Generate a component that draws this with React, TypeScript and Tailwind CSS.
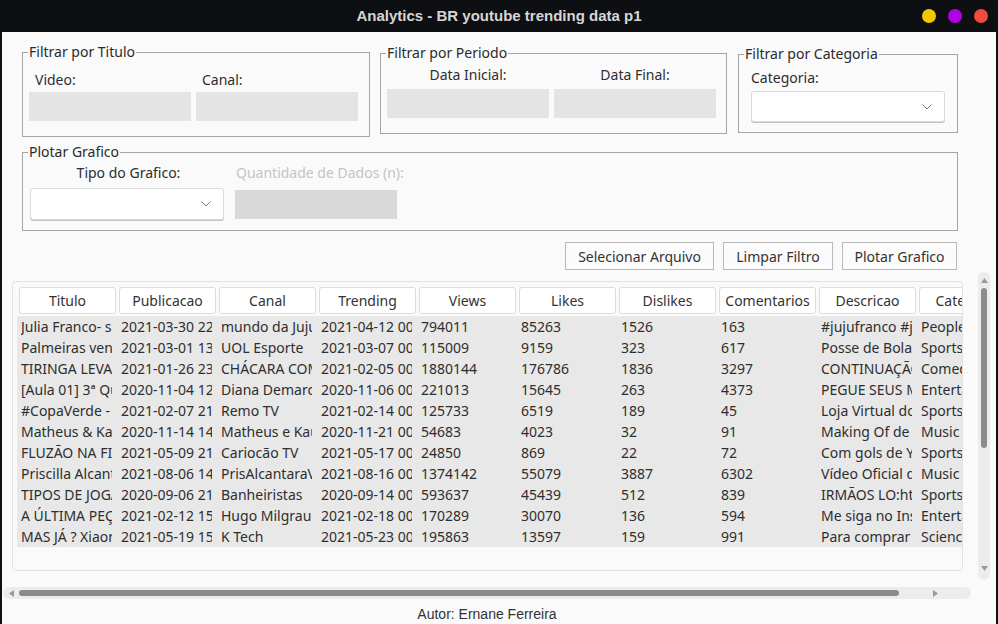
import React from "react";

const rows: string[][] = [
  ["Julia Franco- sabe aquela", "2021-03-30 22:00:05", "mundo da Juju", "2021-04-12 00:00:00", "794011", "85263", "1526", "163", "#jujufranco #julia", "People & Blogs"],
  ["Palmeiras vence o", "2021-03-01 13:45:10", "UOL Esporte", "2021-03-07 00:00:00", "115009", "9159", "323", "617", "Posse de Bola", "Sports"],
  ["TIRINGA LEVA OS", "2021-01-26 23:01:44", "CHÁCARA COMEDIA", "2021-02-05 00:00:00", "1880144", "176786", "1836", "3297", "CONTINUAÇÃO", "Comedy"],
  ["[Aula 01] 3ª Quinzena", "2020-11-04 12:30:00", "Diana Demarchi", "2020-11-06 00:00:00", "221013", "15645", "263", "4373", "PEGUE SEUS MATERIAIS", "Entertainment"],
  ["#CopaVerde - Remo", "2021-02-07 21:15:00", "Remo TV", "2021-02-14 00:00:00", "125733", "6519", "189", "45", "Loja Virtual do Remo", "Sports"],
  ["Matheus & Kauan", "2020-11-14 14:00:00", "Matheus e Kauan", "2020-11-21 00:00:00", "54683", "4023", "32", "91", "Making Of de", "Music"],
  ["FLUZÃO NA FINAL", "2021-05-09 21:40:00", "Cariocão TV", "2021-05-17 00:00:00", "24850", "869", "22", "72", "Com gols de Yago", "Sports"],
  ["Priscilla Alcantara", "2021-08-06 14:00:00", "PrisAlcantaraVEVO", "2021-08-16 00:00:00", "1374142", "55079", "3887", "6302", "Vídeo Oficial de", "Music"],
  ["TIPOS DE JOGADORES", "2020-09-06 21:00:00", "Banheiristas", "2020-09-14 00:00:00", "593637", "45439", "512", "839", "IRMÃOS LO:https", "Sports"],
  ["A ÚLTIMA PEÇA", "2021-02-12 15:00:00", "Hugo Milgrau", "2021-02-18 00:00:00", "170289", "30070", "136", "594", "Me siga no Instagram", "Entertainment"],
  ["MAS JÁ ? Xiaomi", "2021-05-19 15:00:00", "K Tech", "2021-05-23 00:00:00", "195863", "13597", "159", "991", "Para comprar", "Science & Technology"],
];

const headers = ["Titulo", "Publicacao", "Canal", "Trending", "Views", "Likes", "Dislikes", "Comentarios", "Descricao", "Categoria"];

const Group = ({
  title,
  className,
  children,
}: {
  title: string;
  className: string;
  children: React.ReactNode;
}) => (
  <fieldset className={`border border-[#a4a4a4] ${className}`}>
    <legend className="ml-[5px] px-[1px] text-[14px] leading-[18px] text-[#2b2b2b]">{title}</legend>
    {children}
  </fieldset>
);

// combo box with the small chevron on the right
const Combo = ({ h }: { h: string }) => (
  <div
    className={`${h} w-[194px] rounded-[3px] border border-[#dadada] bg-white shadow-[0_1px_0_#c4c4c4] flex items-center justify-end pr-[12px]`}
  >
    <svg width="10" height="6" viewBox="0 0 10 6">
      <polyline points="0.5,0.5 5,5 9.5,0.5" fill="none" stroke="#7c7c7c" strokeWidth="1" />
    </svg>
  </div>
);

export default function App() {
  return (
    <div className="w-[998px] h-[624px] overflow-hidden bg-[#0e0f13] font-['Noto_Sans',sans-serif] text-[#2e2e2e]">
      {/* title bar */}
      <div className="h-[32px] grid grid-cols-[1fr_auto_1fr] items-center">
        <div />
        <div className="font-['Liberation_Sans',sans-serif] font-bold text-[15px] text-[#d6d6d6]">
          Analytics - BR youtube trending data p1
        </div>
        <div className="flex justify-end gap-[12px] pr-[10px]">
          <span className="w-[14px] h-[14px] rounded-full bg-[#f3c600]" />
          <span className="w-[14px] h-[14px] rounded-full bg-[#b200e4]" />
          <span className="w-[14px] h-[14px] rounded-full bg-[#f04a3e]" />
        </div>
      </div>

      {/* window body */}
      <div className="mx-[2px] h-[592px] bg-[#fafafa] flex flex-col">
        {/* filters */}
        <div className="flex items-start pt-[11px] pl-[20px]">
          <Group title="Filtrar por Titulo" className="w-[348px]">
            <div className="pl-[6px] pb-[15px] grid grid-cols-[162px_162px] gap-x-[5px] text-[14px]">
              <div className="mt-[10px] leading-[18px] pl-[6px]">Video:</div>
              <div className="mt-[10px] leading-[18px] pl-[6px]">Canal:</div>
              <div className="mt-[3px] h-[29px] bg-[#e4e4e4]" />
              <div className="mt-[3px] h-[29px] bg-[#e4e4e4]" />
            </div>
          </Group>

          <Group title="Filtrar por Periodo" className="w-[347px] ml-[10px] mt-[1px]">
            <div className="pl-[6px] pb-[15px] grid grid-cols-[162px_162px] gap-x-[5px] text-[14px]">
              <div className="mt-[4px] leading-[18px] text-center">Data Inicial:</div>
              <div className="mt-[4px] leading-[18px] text-center">Data Final:</div>
              <div className="mt-[5px] h-[29px] bg-[#e4e4e4]" />
              <div className="mt-[5px] h-[29px] bg-[#e4e4e4]" />
            </div>
          </Group>

          <Group title="Filtrar por Categoria" className="w-[220px] ml-[11px] mt-[2px]">
            <div className="pl-[12px] pb-[10px] text-[14px]">
              <div className="mt-[6px] leading-[18px]">Categoria:</div>
              <div className="mt-[4px]">
                <Combo h="h-[31px]" />
              </div>
            </div>
          </Group>
        </div>

        {/* plot group */}
        <Group title="Plotar Grafico" className="ml-[20px] mt-[6px] w-[936px]">
          <div className="pl-[7px] pb-[10px] grid grid-cols-[194px_162px] gap-x-[11px] text-[14px] items-center">
            <div className="mt-[3px] leading-[18px] text-center pl-[3px]">Tipo do Grafico:</div>
            <div className="mt-[3px] leading-[18px] pl-[1px] text-[#c4c4c4] whitespace-nowrap">Quantidade de Dados (n):</div>
            <div className="mt-[6px]">
              <Combo h="h-[32px]" />
            </div>
            <div className="mt-[6px] h-[29px] bg-[#d9d9d9]" />
          </div>
        </Group>

        {/* buttons */}
        <div className="mt-[11px] flex justify-end gap-[9px] pr-[39px] text-[14px]">
          <button className="w-[149px] h-[28px] border border-[#b9b9b9] bg-[#fbfbfb] text-[#333]">Selecionar Arquivo</button>
          <button className="w-[110px] h-[28px] border border-[#b9b9b9] bg-[#fbfbfb] text-[#333]">Limpar Filtro</button>
          <button className="w-[115px] h-[28px] border border-[#b9b9b9] bg-[#fbfbfb] text-[#333]">Plotar Grafico</button>
        </div>

        {/* table + vertical scrollbar */}
        <div className="mt-[2px] flex items-start h-[308px]">
          <div className="ml-[10px] mt-[9px] w-[951px] h-[290px] border border-[#e2e2e2] rounded-[4px] overflow-hidden pl-[4px] pt-[5px]">
            <div className="flex w-[1000px]">
              {headers.map((h) => (
                <div key={h} className="w-[100px] shrink-0 pl-[2px]">
                  <div className="w-[97px] h-[27px] bg-white border border-[#dcdcdc] rounded-[3px] flex items-center justify-center text-[14px] leading-[18px] text-[#333] whitespace-nowrap overflow-hidden">
                    {h}
                  </div>
                </div>
              ))}
            </div>
            <div className="mt-[2px] w-[1000px] bg-[#e8e8e8]">
              {rows.map((r, i) => (
                <div key={i} className="flex h-[21px] items-center text-[14px] text-[#2e2e2e]">
                  {r.map((c, j) => (
                    <div key={j} className="w-[100px] shrink-0 pl-[4px] pr-[5px]">
                      <div className="overflow-hidden whitespace-nowrap leading-[21px]">{c}</div>
                    </div>
                  ))}
                </div>
              ))}
            </div>
          </div>

          <div className="ml-[15px] w-[12px] h-[308px] rounded-full bg-[#ececec] flex flex-col items-center">
            <div className="h-[16px] flex items-center justify-center">
              <svg width="7" height="5" viewBox="0 0 7 5">
                <polygon points="3.5,0 7,5 0,5" fill="#9a9a9a" />
              </svg>
            </div>
            <div className="w-[6px] h-[160px] rounded-full bg-[#8b8b8b]" />
            <div className="flex-1" />
            <div className="h-[24px] flex items-center justify-center">
              <svg width="7" height="5" viewBox="0 0 7 5">
                <polygon points="0,0 7,0 3.5,5" fill="#9a9a9a" />
              </svg>
            </div>
          </div>
        </div>

        {/* horizontal scrollbar */}
        <div className="mt-[7px] ml-[1px] w-[968px] h-[12px] rounded-full bg-[#ececec] flex items-center">
          <div className="w-[16px] flex items-center justify-center">
            <svg width="5" height="7" viewBox="0 0 5 7">
              <polygon points="5,0 5,7 0,3.5" fill="#9a9a9a" />
            </svg>
          </div>
          <div className="w-[880px] h-[6px] rounded-full bg-[#8b8b8b]" />
          <div className="flex-1 flex items-center justify-center">
            <svg width="5" height="7" viewBox="0 0 5 7">
              <polygon points="0,0 5,3.5 0,7" fill="#9a9a9a" />
            </svg>
          </div>
        </div>

        {/* footer */}
        <div className="mt-[6px] ml-[1px] w-[968px] text-center leading-[18px] text-[14px] text-[#333] font-['Liberation_Sans',sans-serif]">
          Autor: Ernane Ferreira
        </div>
      </div>
    </div>
  );
}
